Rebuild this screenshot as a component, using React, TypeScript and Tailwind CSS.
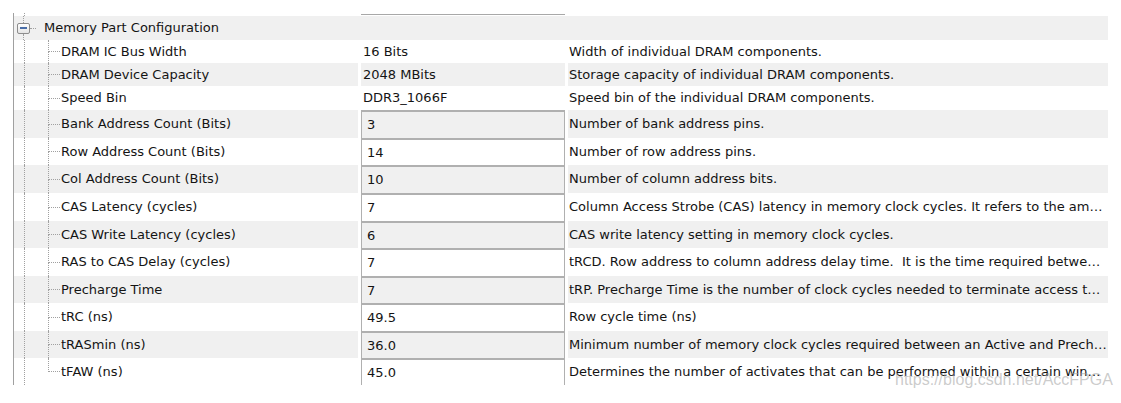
import React from 'react';

type Row = {
  label: string;
  value: string;
  desc: string;
  input?: boolean;
  h: string;
};

const rows: Row[] = [
  { label: 'DRAM IC Bus Width', value: '16 Bits', desc: 'Width of individual DRAM components.', h: 'h-[23px]' },
  { label: 'DRAM Device Capacity', value: '2048 MBits', desc: 'Storage capacity of individual DRAM components.', h: 'h-[23px]' },
  { label: 'Speed Bin', value: 'DDR3_1066F', desc: 'Speed bin of the individual DRAM components.', h: 'h-[24px]' },
  { label: 'Bank Address Count (Bits)', value: '3', desc: 'Number of bank address pins.', input: true, h: 'h-[28px]' },
  { label: 'Row Address Count (Bits)', value: '14', desc: 'Number of row address pins.', input: true, h: 'h-[27px]' },
  { label: 'Col Address Count (Bits)', value: '10', desc: 'Number of column address bits.', input: true, h: 'h-[28px]' },
  {
    label: 'CAS Latency (cycles)',
    value: '7',
    desc: 'Column Access Strobe (CAS) latency in memory clock cycles. It refers to the amount of time between sending a column address to the memory and the beginning of the data in response.',
    input: true,
    h: 'h-[28px]',
  },
  { label: 'CAS Write Latency (cycles)', value: '6', desc: 'CAS write latency setting in memory clock cycles.', input: true, h: 'h-[27px]' },
  {
    label: 'RAS to CAS Delay (cycles)',
    value: '7',
    desc: 'tRCD. Row address to column address delay time.  It is the time required between the memory controller asserting a row address strobe (RAS), and then asserting a column address strobe (CAS).',
    input: true,
    h: 'h-[28px]',
  },
  {
    label: 'Precharge Time',
    value: '7',
    desc: 'tRP. Precharge Time is the number of clock cycles needed to terminate access to an open row of memory, and open access to the next row.',
    input: true,
    h: 'h-[27px]',
  },
  { label: 'tRC (ns)', value: '49.5', desc: 'Row cycle time (ns)', input: true, h: 'h-[28px]' },
  {
    label: 'tRASmin (ns)',
    value: '36.0',
    desc: 'Minimum number of memory clock cycles required between an Active and Precharge command.',
    input: true,
    h: 'h-[27px]',
  },
  {
    label: 'tFAW (ns)',
    value: '45.0',
    desc: 'Determines the number of activates that can be performed within a certain window of time.',
    input: true,
    h: 'h-[27px]',
  },
];

const TreeLine = () => <div className="w-px self-stretch border-l border-dotted border-[#a0a0a0]" />;

const PropertyRow = ({ row, index, last }: { row: Row; index: number; last: boolean }) => {
  const gray = index % 2 === 1;
  const bg = gray ? 'bg-[#f0f0f0]' : 'bg-white';
  return (
    <div className={`flex ${row.h}`}>
      {/* name column with tree connectors */}
      <div className={`flex w-[344px] items-stretch ${bg}`}>
        <div className="w-[10px]" />
        <TreeLine />
        <div className="w-[23px]" />
        <div className="flex w-[12px] flex-col">
          <div className="flex-1 border-b border-l border-dotted border-[#a0a0a0]" />
          <div className={`flex-1 ${last ? '' : 'border-l border-dotted border-[#a0a0a0]'}`} />
        </div>
        <span className="flex items-center pl-px whitespace-nowrap">{row.label}</span>
      </div>
      <div className="w-[3px] bg-white" />
      {row.input ? (
        <div className={`flex w-[204px] items-center border-x border-t-2 border-[#b0b0b0] pl-[5px] ${bg}`}>
          {row.value}
        </div>
      ) : (
        <div className={`flex w-[204px] items-center pl-[2px] ${bg}`}>{row.value}</div>
      )}
      <div className="w-[3px] bg-white" />
      <div className={`flex w-[540px] items-center overflow-hidden pl-px ${bg}`}>
        <span className="block overflow-hidden text-ellipsis whitespace-pre">{row.desc}</span>
      </div>
    </div>
  );
};

export default function App() {
  return (
    <div
      className="relative h-[403px] w-[1121px] overflow-hidden bg-white pl-[13px] pt-[13px] text-[13px] leading-[16px] text-[#141414]"
      style={{ fontFamily: '"DejaVu Sans", Verdana, sans-serif' }}
    >
      <div className="w-[1095px] border-l border-[#a0a0a0]">
        {/* remnant of the row above */}
        <div className="flex h-[3px]">
          <div className="flex w-[344px]">
            <div className="w-[10px]" />
            <TreeLine />
          </div>
          <div className="w-[3px]" />
          <div className="w-[204px] pt-px">
            <div className="h-px bg-[#a8a8a8]" />
          </div>
        </div>

        {/* section header */}
        <div className="flex h-[24px] bg-[#f0f0f0]">
          <div className="w-[3px]" />
          <div className="flex w-[13px] flex-col items-center">
            <div className="flex-1 border-l border-dotted border-[#a0a0a0]" />
            <div className="flex h-[11px] w-[13px] items-center justify-center rounded-[2px] border border-[#8c8c8c] bg-gradient-to-b from-white to-[#e4e4e4]">
              <div className="h-[2px] w-[7px] bg-[#4a6ea8]" />
            </div>
            <div className="flex-1 border-l border-dotted border-[#a0a0a0]" />
          </div>
          <div className="flex w-[6px] flex-col">
            <div className="flex-1 border-b border-dotted border-[#a0a0a0]" />
            <div className="flex-1" />
          </div>
          <span className="flex items-center pl-[8px] whitespace-nowrap">Memory Part Configuration</span>
        </div>

        {rows.map((row, i) => (
          <PropertyRow key={row.label} row={row} index={i} last={i === rows.length - 1} />
        ))}
      </div>

      <span
        className="absolute left-[895px] top-[370px] whitespace-nowrap text-[16px] leading-[20px] text-[rgba(160,160,160,0.55)]"
        style={{ fontFamily: '"Liberation Sans", Arial, sans-serif' }}
      >
        https://blog.csdn.net/AccFPGA
      </span>
    </div>
  );
}
